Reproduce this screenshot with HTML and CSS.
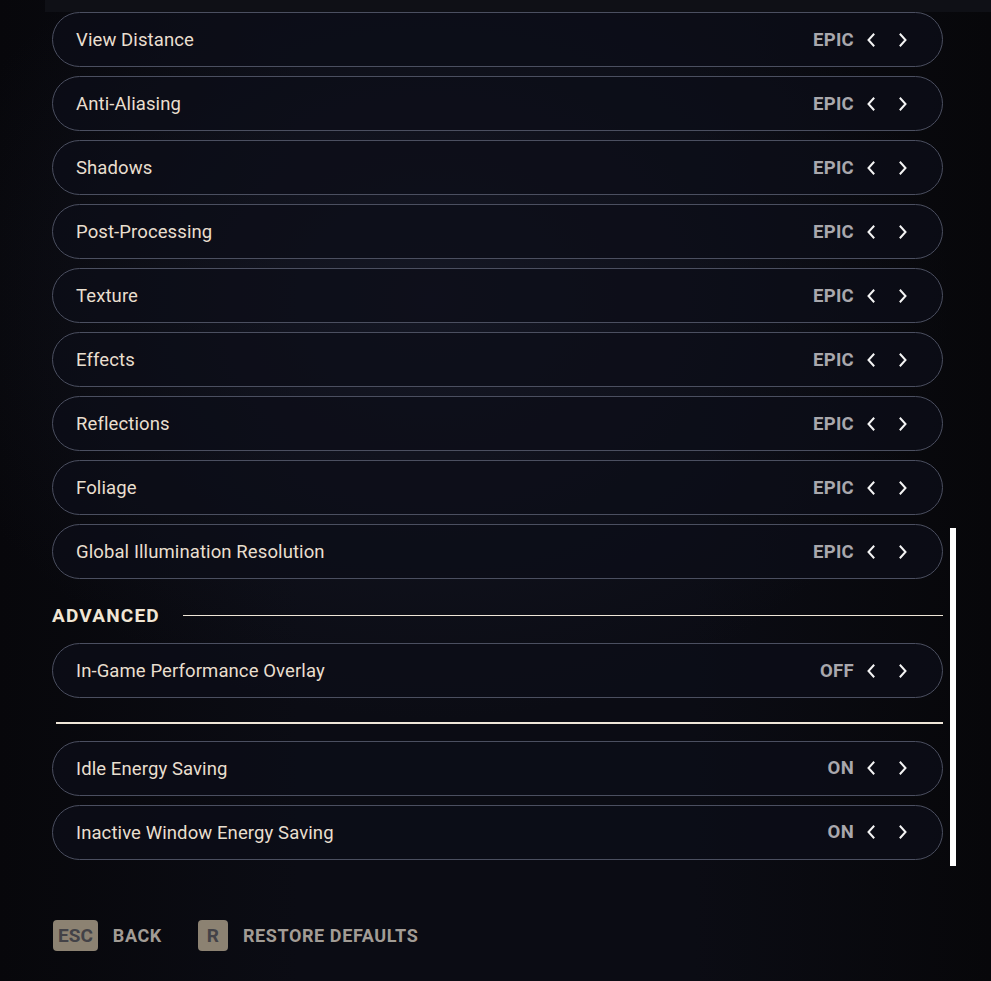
FILE: index.html
```html
<!DOCTYPE html>
<html>
<head>
<meta charset="utf-8">
<link rel="stylesheet" href="styles.css">
</head>
<body>
<div class="page">
  <div class="topband"></div>
  <div class="list">
    <div class="row"><span class="label">View Distance</span><div class="ctrl"><span class="val">EPIC</span><svg class="chev" viewBox="0 0 10 14"><polyline points="7.5,1.5 2.5,7 7.5,12.5"/></svg><svg class="chev" viewBox="0 0 10 14"><polyline points="2.5,1.5 7.5,7 2.5,12.5"/></svg></div></div>
    <div class="row"><span class="label">Anti-Aliasing</span><div class="ctrl"><span class="val">EPIC</span><svg class="chev" viewBox="0 0 10 14"><polyline points="7.5,1.5 2.5,7 7.5,12.5"/></svg><svg class="chev" viewBox="0 0 10 14"><polyline points="2.5,1.5 7.5,7 2.5,12.5"/></svg></div></div>
    <div class="row"><span class="label">Shadows</span><div class="ctrl"><span class="val">EPIC</span><svg class="chev" viewBox="0 0 10 14"><polyline points="7.5,1.5 2.5,7 7.5,12.5"/></svg><svg class="chev" viewBox="0 0 10 14"><polyline points="2.5,1.5 7.5,7 2.5,12.5"/></svg></div></div>
    <div class="row"><span class="label">Post-Processing</span><div class="ctrl"><span class="val">EPIC</span><svg class="chev" viewBox="0 0 10 14"><polyline points="7.5,1.5 2.5,7 7.5,12.5"/></svg><svg class="chev" viewBox="0 0 10 14"><polyline points="2.5,1.5 7.5,7 2.5,12.5"/></svg></div></div>
    <div class="row"><span class="label">Texture</span><div class="ctrl"><span class="val">EPIC</span><svg class="chev" viewBox="0 0 10 14"><polyline points="7.5,1.5 2.5,7 7.5,12.5"/></svg><svg class="chev" viewBox="0 0 10 14"><polyline points="2.5,1.5 7.5,7 2.5,12.5"/></svg></div></div>
    <div class="row"><span class="label">Effects</span><div class="ctrl"><span class="val">EPIC</span><svg class="chev" viewBox="0 0 10 14"><polyline points="7.5,1.5 2.5,7 7.5,12.5"/></svg><svg class="chev" viewBox="0 0 10 14"><polyline points="2.5,1.5 7.5,7 2.5,12.5"/></svg></div></div>
    <div class="row"><span class="label">Reflections</span><div class="ctrl"><span class="val">EPIC</span><svg class="chev" viewBox="0 0 10 14"><polyline points="7.5,1.5 2.5,7 7.5,12.5"/></svg><svg class="chev" viewBox="0 0 10 14"><polyline points="2.5,1.5 7.5,7 2.5,12.5"/></svg></div></div>
    <div class="row"><span class="label">Foliage</span><div class="ctrl"><span class="val">EPIC</span><svg class="chev" viewBox="0 0 10 14"><polyline points="7.5,1.5 2.5,7 7.5,12.5"/></svg><svg class="chev" viewBox="0 0 10 14"><polyline points="2.5,1.5 7.5,7 2.5,12.5"/></svg></div></div>
    <div class="row"><span class="label">Global Illumination Resolution</span><div class="ctrl"><span class="val">EPIC</span><svg class="chev" viewBox="0 0 10 14"><polyline points="7.5,1.5 2.5,7 7.5,12.5"/></svg><svg class="chev" viewBox="0 0 10 14"><polyline points="2.5,1.5 7.5,7 2.5,12.5"/></svg></div></div>
    <div class="section"><span class="stitle">ADVANCED</span><span class="sline"></span></div>
    <div class="row"><span class="label">In-Game Performance Overlay</span><div class="ctrl"><span class="val">OFF</span><svg class="chev" viewBox="0 0 10 14"><polyline points="7.5,1.5 2.5,7 7.5,12.5"/></svg><svg class="chev" viewBox="0 0 10 14"><polyline points="2.5,1.5 7.5,7 2.5,12.5"/></svg></div></div>
    <div class="sep"></div>
    <div class="row"><span class="label">Idle Energy Saving</span><div class="ctrl"><span class="val">ON</span><svg class="chev" viewBox="0 0 10 14"><polyline points="7.5,1.5 2.5,7 7.5,12.5"/></svg><svg class="chev" viewBox="0 0 10 14"><polyline points="2.5,1.5 7.5,7 2.5,12.5"/></svg></div></div>
    <div class="row"><span class="label">Inactive Window Energy Saving</span><div class="ctrl"><span class="val">ON</span><svg class="chev" viewBox="0 0 10 14"><polyline points="7.5,1.5 2.5,7 7.5,12.5"/></svg><svg class="chev" viewBox="0 0 10 14"><polyline points="2.5,1.5 7.5,7 2.5,12.5"/></svg></div></div>
  </div>
  <div class="scrollbar"></div>
  <div class="footer">
    <div class="hint"><span class="key">ESC</span><span class="act">BACK</span></div>
    <div class="hint"><span class="key r">R</span><span class="act">RESTORE DEFAULTS</span></div>
  </div>
</div>
</body>
</html>
```
FILE: styles.css
```css
html, body {
  margin: 0;
  padding: 0;
  background: #07070b;
}
body {
  font-family: Roboto, "Liberation Sans", sans-serif;
  width: 991px;
  height: 981px;
  overflow: hidden;
}
.page {
  position: relative;
  width: 991px;
  height: 981px;
  background:
    radial-gradient(ellipse 520px 420px at 430px 300px, rgba(30,34,52,0.5), rgba(0,0,0,0) 100%),
    linear-gradient(90deg, #07070b 0%, #0b0c14 30%, #0b0c14 70%, #07070a 100%);
}
.topband {
  position: absolute;
  left: 45px;
  right: 0;
  top: 0;
  height: 12px;
  background: #0f1016;
}
.list {
  position: relative;
  padding: 12px 48px 0 52px;
  display: flex;
  flex-direction: column;
}
.row {
  box-sizing: border-box;
  height: 55px;
  margin-bottom: 9px;
  border: 1px solid #4b4f60;
  border-radius: 28px;
  background: rgba(12, 14, 24, 0.75);
  display: flex;
  align-items: center;
  justify-content: space-between;
  padding: 0 34px 0 23px;
}
.label {
  color: #e9dfcf;
  font-size: 18.5px;
  letter-spacing: 0.1px;
  padding-top: 1px;
}
.ctrl {
  display: flex;
  align-items: center;
}
.val {
  color: #a9a8ad;
  font-size: 18.5px;
  font-weight: 700;
  margin-right: 12px;
  letter-spacing: 0.3px;
}
.chev {
  width: 10px;
  height: 14px;
  display: block;
  fill: none;
  stroke: #f4f4f4;
  stroke-width: 2;
  stroke-linecap: square;
}
.chev + .chev {
  margin-left: 22px;
}
.section {
  height: 55px;
  display: flex;
  align-items: center;
}
.stitle {
  color: #f1e6d4;
  font-size: 19px;
  font-weight: 700;
  letter-spacing: 1.2px;
  margin-right: 23px;
}
.sline {
  flex: 1;
  height: 1.5px;
  background: #efe6d8;
}
.sep {
  height: 1.5px;
  background: #efe6d8;
  margin: 15px 0 17px 4px;
}
.scrollbar {
  position: absolute;
  left: 950px;
  top: 528px;
  width: 6px;
  height: 338px;
  background: #ffffff;
}
.footer {
  position: absolute;
  left: 53px;
  top: 920px;
  display: flex;
  align-items: center;
  gap: 36px;
}
.hint {
  display: flex;
  align-items: center;
}
.key {
  box-sizing: border-box;
  height: 31px;
  min-width: 31px;
  padding: 0 5px;
  border-radius: 4px;
  background: #8c8272;
  color: #434247;
  font-size: 19px;
  font-weight: 700;
  display: flex;
  align-items: center;
  justify-content: center;
}
.key.r {
  width: 30px;
  min-width: 30px;
  padding: 0;
}
.act {
  color: #a29c95;
  font-size: 18px;
  font-weight: 700;
  letter-spacing: 0.6px;
  margin-left: 15px;
}
```
